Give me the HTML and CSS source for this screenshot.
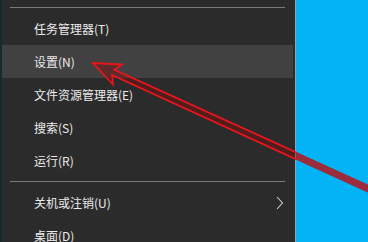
FILE: index.html
```html
<!DOCTYPE html>
<html lang="zh-CN">
<head>
<meta charset="utf-8">
<title>菜单</title>
<link rel="stylesheet" href="styles.css">
</head>
<body>
<div class="screen">
  <div class="menu">
    <div class="sep"></div>
    <div class="item">任务管理器(T)</div>
    <div class="item hover">设置(N)</div>
    <div class="item">文件资源管理器(E)</div>
    <div class="item">搜索(S)</div>
    <div class="item">运行(R)</div>
    <div class="sep"></div>
    <div class="item">关机或注销(U)
      <svg class="chev" width="8" height="14" viewBox="0 0 8 14"><polyline points="1,1 6.5,7 1,13" fill="none" stroke="#d0d0d0" stroke-width="1.1"/></svg>
    </div>
    <div class="item">桌面(D)</div>
  </div>
  <div class="desktop"></div>
  <svg class="arrow" width="368" height="242" viewBox="0 0 368 242">
    <defs>
      <clipPath id="dark"><rect x="0" y="0" width="296" height="242"/></clipPath>
      <clipPath id="blue"><rect x="296" y="0" width="72" height="242"/></clipPath>
    </defs>
    <g clip-path="url(#dark)">
      <polygon points="93,63 122,64.5 114.5,69.8 403,201 400.5,207 112,75 113,84.5" fill="rgba(140,8,8,0.4)" stroke="#e8161c" stroke-width="1.8" stroke-linejoin="miter"/>
    </g>
    <g clip-path="url(#blue)">
      <polygon points="114.5,69.8 403,201 400.5,207 112,75" fill="#9a2c3c" stroke="#9a2c3c" stroke-width="1"/>
    </g>
  </svg>
</div>
</body>
</html>
```
FILE: styles.css
```css
html, body {
  margin: 0;
  padding: 0;
}
body {
  background: #2b2b2b;
  font-family: "Noto Sans CJK SC", "Noto Sans", sans-serif;
}
.screen {
  position: relative;
  width: 368px;
  height: 242px;
  overflow: hidden;
  display: flex;
}
.menu {
  width: 293px;
  background: #2b2b2b;
  border-left: 2px solid #1a2830;
  border-right: 1px solid #8fa5b0;
  padding-top: 3px;
  display: flex;
  flex-direction: column;
  flex: none;
}
.sep {
  height: 1px;
  background: #7a7a7a;
  margin: 4px 10px 4px 8px;
  flex: none;
}
.item {
  height: 33px;
  flex: none;
  display: flex;
  align-items: center;
  padding-left: 32px;
  padding-right: 9px;
  margin-right: 2px;
  color: #ececec;
  font-size: 12px;
}
.item.hover {
  background: #414141;
}
.chev {
  margin-left: auto;
}
.desktop {
  flex: 1;
  background: #03b3f6;
}
.arrow {
  position: absolute;
  left: 0;
  top: 0;
}
```
